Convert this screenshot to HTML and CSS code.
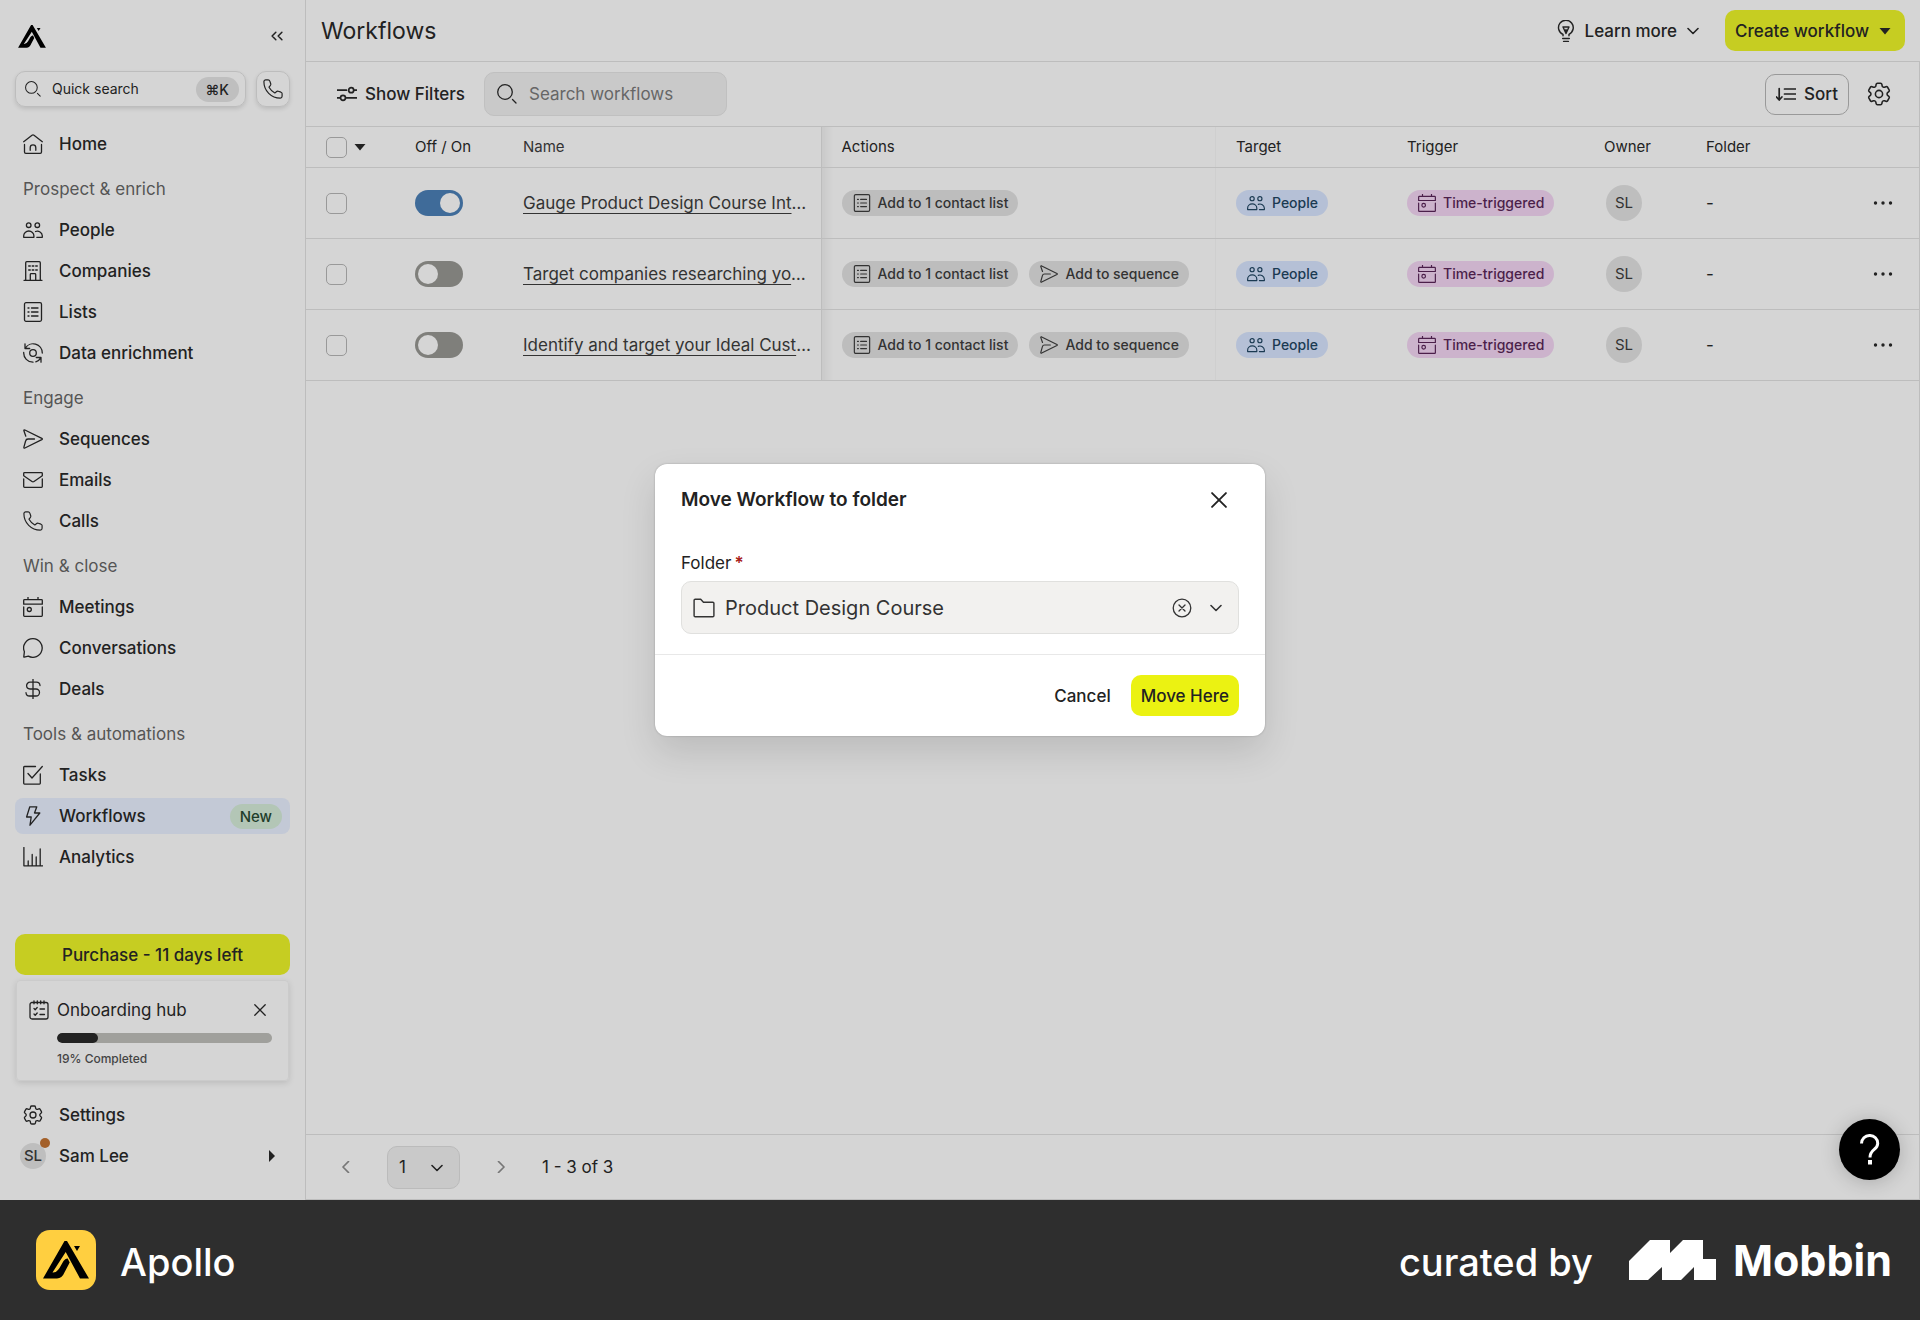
FILE: index.html
```html
<!DOCTYPE html>
<html lang="en">
<head>
<meta charset="utf-8">
<title>Workflows</title>
<meta name="viewport" content="width=device-width, initial-scale=1">
<link rel="stylesheet" href="styles.css">
</head>
<body>
<svg class="sprite" aria-hidden="true">
  <symbol id="logo" viewBox="0 0 46 38"><path d="M21.500 0H24l22 37.500h-9L22.700 11 9.500 31.500q4 .5 7-4.500l4-7q2-3 4.200-2.500l2 4-5 9.500Q19 37.500 14 37.500H0z"/><path d="M31 5h6l-3 5z"/></symbol>
  <symbol id="home" viewBox="0 0 20 20"><path d="M.7 7.700 9 1.300q1-.7 2 0l8.300 6.400M1.500 10.500V18q0 1.300 1.300 1.300h14.400q1.300 0 1.300-1.300v-7.500M7.200 16.300v-2.600a2.800 2.800 0 0 1 5.600 0v2.600"/></symbol>
  <symbol id="people" viewBox="0 0 20 20"><circle cx="5.700" cy="5.200" r="2.300"/><circle cx="14.300" cy="5.200" r="2.300"/><path d="M.7 17.300v-1.500a5.100 4.800 0 0 1 10.200 0v1.500zM12.500 11.500a5 4.800 0 0 1 6.800 4.300v1.500h-5.500"/></symbol>
  <symbol id="building" viewBox="0 0 20 20"><path d="M1 19.300h18M2.700 19V1.700q0-1 1-1h12.600q1 0 1 1V19M7.300 19v-5.500q0-.8.800-.8h3.800q.8 0 .8.800V19M5.700 5h1.600m1.900 0h1.600m1.900 0h1.600M5.700 9h1.600m1.900 0h1.600m1.900 0h1.600"/></symbol>
  <symbol id="list" viewBox="0 0 20 20"><rect x="1.500" y=".7" width="17" height="18.600" rx="1.500"/><path d="M5 6h1M8.500 6h6.500M5 10h1M8.500 10h6.500M5 14h1M8.500 14h6.500"/></symbol>
  <symbol id="enrich" viewBox="0 0 20 20"><circle cx="10" cy="10" r="3.300"/><path d="M2 .8v4.700h4.700M2.200 5.300A9.200 9.200 0 0 1 19.300 10M.7 9.500a9.200 9.200 0 0 0 9.300 9.700M18 19.200v-4.700h-4.700M17.800 14.800a9 9 0 0 1-5 4"/></symbol>
  <symbol id="send" viewBox="0 0 20 20"><path d="M2.800 7.200.9 1.800Q.6.500 1.900 1L18.800 9.400q1.100.6 0 1.200L1.900 19q-1.300.5-1-.8L2.600 12q.5-2 2.400-2h6.500"/></symbol>
  <symbol id="mail" viewBox="0 0 20 20"><path d="M.7 5.800V3.500q0-.8.8-.8h17q.8 0 .8.800v2.300L11 11.500q-1 .7-2 0zM.7 9v7.500q0 .8.800.8h17q.8 0 .8-.8V9"/></symbol>
  <symbol id="phone" viewBox="1 1 22 22"><path d="M22 17v3a2 2 0 0 1-2 2A18 18 0 0 1 2 4a2 2 0 0 1 2-2h2.700q1.300 0 1.800 1.300l1 2.900q.4 1.200-.5 2.100L7.600 10A17 17 0 0 0 14 16.400l1.700-1.400q.9-.9 2.100-.5l2.900 1q1.300.5 1.300 1.500z"/></symbol>
  <symbol id="calendar" viewBox="0 0 20 20"><path d="M5 .2v2.500M15 .2v2.500M.7 7.200V3.500q0-.8.800-.8h17q.8 0 .8.800v3.700zM.7 10v8.500q0 .8.800.8h17q.8 0 .8-.8V10"/><circle cx="6.300" cy="12.500" r="2"/></symbol>
  <symbol id="chat" viewBox="0 0 20 20"><path d="M10 .7a9.300 9.300 0 1 1-4.700 17.400L1.200 19.200q-.5 0-.4-.6l.6-4.900A9.300 9.300 0 0 1 10 .7z"/></symbol>
  <symbol id="dollar" viewBox="0 0 20 20"><path d="M10 0v20M17 6.500q-.3-3.300-3.500-3.300H7a3.400 3.400 0 0 0 0 6.800h6a3.500 3.500 0 0 1 0 7H6.500Q3.300 17 3 13.700"/></symbol>
  <symbol id="task" viewBox="0 0 20 20"><path d="M12.500 1.500h-11q-.8 0-.8.800v16q0 .8.800.8h15q.8 0 .8-.8V9M5 8.500l4 4.500L19.300 1.500"/></symbol>
  <symbol id="bolt" viewBox="0 0 20 20"><path d="M6.800.8h7L11.500 7h5.300L7 19.200 8.200 11H3.600z"/></symbol>
  <symbol id="chart" viewBox="0 0 20 20"><path d="M.9.500v18.300h18.600M5.200 18.500V14M9.200 18.500V7.500M13.200 18.500V10M17.200 18.500V2"/></symbol>
  <symbol id="gear" viewBox="2 2 20 20"><path d="M9.594 3.940c.09-.542.56-.94 1.110-.94h2.593c.55 0 1.020.398 1.110.94l.213 1.281c.063.374.313.686.645.87.074.04.147.083.22.127.325.196.72.257 1.075.124l1.217-.456a1.125 1.125 0 0 1 1.370.49l1.296 2.247a1.125 1.125 0 0 1-.26 1.431l-1.003.827c-.293.241-.438.613-.43.992a7.723 7.723 0 0 1 0 .255c-.008.378.137.75.43.991l1.004.827c.424.35.534.955.26 1.430l-1.298 2.247a1.125 1.125 0 0 1-1.369.491l-1.217-.456c-.355-.133-.75-.072-1.076.124a6.470 6.470 0 0 1-.22.128c-.331.183-.581.495-.644.869l-.213 1.281c-.09.543-.56.94-1.110.94h-2.594c-.55 0-1.019-.398-1.110-.94l-.213-1.281c-.062-.374-.312-.686-.644-.87a6.520 6.520 0 0 1-.22-.127c-.325-.196-.72-.257-1.076-.124l-1.217.456a1.125 1.125 0 0 1-1.369-.49l-1.297-2.247a1.125 1.125 0 0 1 .26-1.431l1.004-.827c.292-.24.437-.613.43-.991a6.932 6.932 0 0 1 0-.255c.007-.38-.138-.751-.43-.992l-1.004-.827a1.125 1.125 0 0 1-.26-1.430l1.297-2.247a1.125 1.125 0 0 1 1.370-.491l1.216.456c.356.133.751.072 1.076-.124.072-.044.146-.086.22-.128.332-.183.582-.495.644-.869z"/><circle cx="12" cy="12" r="3"/></symbol>
  <symbol id="search" viewBox="0 0 20 20"><circle cx="8" cy="8" r="7.300"/><path d="m15.500 15.500 3.500 3.500"/></symbol>
  <symbol id="filters" viewBox="0 0 20 20"><path d="M0 6.200h9.500M17.500 6.200H20M0 13.800h3M9.500 13.800H20"/><circle cx="14.200" cy="6.200" r="2.500"/><circle cx="6" cy="13.800" r="2.500"/></symbol>
  <symbol id="sort" viewBox="0 0 20 20"><path d="M3.200 4.500v11M.5 13l2.700 3 2.700-3M8.500 5H20M8.500 10H20M8.500 15H20"/></symbol>
  <symbol id="bulb" viewBox="0 0 20 20"><path d="M7.300 14.300v-1.200A6.700 6.700 0 1 1 12.700 13v1.300M7 16.800h6M7.800 19.400h4.400M7.300 6.300h5.400L10 12.300zM10 8.500v3.500"/></symbol>
  <symbol id="down" viewBox="0 0 12 12"><path d="m1 3.500 5 5 5-5"/></symbol>
  <symbol id="left" viewBox="0 0 12 12"><path d="M8.500.5 3 6l5.500 5.500"/></symbol>
  <symbol id="right" viewBox="0 0 12 12"><path d="M3.500.5 9 6l-5.500 5.500"/></symbol>
  <symbol id="collapse" viewBox="0 0 12 12"><path d="M5 2.800 1.800 6 5 9.200M10.200 2.800 7 6l3.200 3.200"/></symbol>
  <symbol id="close" viewBox="0 0 12 12"><path d="m.8.8 10.400 10.400M11.200.8.8 11.200"/></symbol>
  <symbol id="caret" viewBox="0 0 12 12"><path d="M.5 3h11L6 9.500z"/></symbol>
  <symbol id="caret-right" viewBox="0 0 12 12"><path d="M3 0v12l6-6z"/></symbol>
  <symbol id="dots" viewBox="0 0 20 20"><circle cx="2.500" cy="10" r="1.700"/><circle cx="10" cy="10" r="1.700"/><circle cx="17.500" cy="10" r="1.700"/></symbol>
  <symbol id="folder" viewBox="0 0 20 20"><path d="M1 3q0-1 1-1h5l2.500 2.700H18q1 0 1 1V17q0 1-1 1H2q-1 0-1-1z"/></symbol>
  <symbol id="clear" viewBox="0 0 20 20"><circle cx="10" cy="10" r="8.800"/><path d="m7 7 6 6M13 7l-6 6"/></symbol>
  <symbol id="checklist" viewBox="0 0 20 20"><rect x="1" y="2.500" width="18" height="16.500" rx="2"/><path d="M5 .8v3M8.300.8v3M11.700.8v3M15 .8v3M5 8.500l1.200 1.200 2-2.200M11 9h4.500M5 14l1.200 1.200 2-2.200M11 14.500h4.500"/></symbol>
</svg>

<div class="app">
  <aside class="sidebar">
    <div class="brand">
      <svg class="brand-logo"><use href="#logo"/></svg>
      <button class="bare" aria-label="Collapse sidebar"><svg class="icon collapse"><use href="#collapse"/></svg></button>
    </div>
    <div class="quick">
      <button class="quick-search"><svg class="icon s16"><use href="#search"/></svg><span>Quick search</span><kbd>⌘K</kbd></button>
      <button class="quick-call" aria-label="Call"><svg class="icon s20"><use href="#phone"/></svg></button>
    </div>
    <nav class="nav">
      <a href="#"><svg class="icon s20"><use href="#home"/></svg>Home</a>
      <h2>Prospect &amp; enrich</h2>
      <a href="#"><svg class="icon s20"><use href="#people"/></svg>People</a>
      <a href="#"><svg class="icon s20"><use href="#building"/></svg>Companies</a>
      <a href="#"><svg class="icon s20"><use href="#list"/></svg>Lists</a>
      <a href="#"><svg class="icon s20"><use href="#enrich"/></svg>Data enrichment</a>
      <h2>Engage</h2>
      <a href="#"><svg class="icon s20"><use href="#send"/></svg>Sequences</a>
      <a href="#"><svg class="icon s20"><use href="#mail"/></svg>Emails</a>
      <a href="#"><svg class="icon s20"><use href="#phone"/></svg>Calls</a>
      <h2>Win &amp; close</h2>
      <a href="#"><svg class="icon s20"><use href="#calendar"/></svg>Meetings</a>
      <a href="#"><svg class="icon s20"><use href="#chat"/></svg>Conversations</a>
      <a href="#"><svg class="icon s20"><use href="#dollar"/></svg>Deals</a>
      <h2>Tools &amp; automations</h2>
      <a href="#"><svg class="icon s20"><use href="#task"/></svg>Tasks</a>
      <a href="#" class="active" aria-current="page"><svg class="icon s20"><use href="#bolt"/></svg>Workflows<span class="badge">New</span></a>
      <a href="#"><svg class="icon s20"><use href="#chart"/></svg>Analytics</a>
    </nav>
    <div class="sidebar-end">
      <button class="btn primary wide">Purchase - 11 days left</button>
      <section class="hub">
        <div class="hub-head"><svg class="icon s20"><use href="#checklist"/></svg><span>Onboarding hub</span><button class="bare" aria-label="Dismiss"><svg class="icon s12"><use href="#close"/></svg></button></div>
        <div class="progress"><div class="progress-fill" style="width:19%"></div></div>
        <p>19% Completed</p>
      </section>
      <nav class="nav">
        <a href="#"><svg class="icon s20"><use href="#gear"/></svg>Settings</a>
        <a href="#" class="user"><span class="avatar small">SL<i class="status"></i></span>Sam Lee<svg class="solid s12 push"><use href="#caret-right"/></svg></a>
      </nav>
    </div>
  </aside>

  <main class="main">
    <header class="topbar">
      <h1>Workflows</h1>
      <div class="topbar-actions">
        <button class="btn plain menu"><svg class="icon s22"><use href="#bulb"/></svg>Learn more<svg class="icon s12 chev"><use href="#down"/></svg></button>
        <button class="btn primary create">Create workflow<svg class="solid s12"><use href="#caret"/></svg></button>
      </div>
    </header>
    <div class="panel">
      <div class="toolbar">
        <button class="btn plain"><svg class="icon s20 bold"><use href="#filters"/></svg>Show Filters</button>
        <label class="search"><svg class="icon s20"><use href="#search"/></svg><input type="search" placeholder="Search workflows" aria-label="Search workflows"></label>
        <div class="toolbar-end">
          <button class="btn outline"><svg class="icon s20 bold"><use href="#sort"/></svg>Sort</button>
          <button class="bare" aria-label="Table settings"><svg class="icon s24"><use href="#gear"/></svg></button>
        </div>
      </div>
      <table>
        <colgroup><col class="c-check"><col class="c-toggle"><col class="c-name"><col class="c-actions"><col class="c-target"><col class="c-trigger"><col class="c-owner"><col></colgroup>
        <thead>
          <tr>
            <th><div class="checks"><input type="checkbox" class="check" aria-label="Select all"><svg class="solid s12"><use href="#caret"/></svg></div></th>
            <th>Off / On</th><th class="pinned">Name</th><th>Actions</th><th>Target</th><th>Trigger</th><th>Owner</th><th>Folder</th>
          </tr>
        </thead>
        <tbody>
          <tr>
            <td><div class="checks"><input type="checkbox" class="check" aria-label="Select row"></div></td>
            <td><input type="checkbox" class="toggle" aria-label="On" checked></td>
            <td class="pinned"><a href="#">Gauge Product Design Course Int</a>…</td>
            <td><div class="chips"><span class="chip"><svg class="icon s18"><use href="#list"/></svg>Add to 1 contact list</span></div></td>
            <td><div class="chips"><span class="chip blue"><svg class="icon s18"><use href="#people"/></svg>People</span></div></td>
            <td><div class="chips"><span class="chip pink"><svg class="icon s18"><use href="#calendar"/></svg>Time-triggered</span></div></td>
            <td><span class="avatar">SL</span></td>
            <td><div class="last"><span>-</span><button class="bare" aria-label="More"><svg class="solid s20"><use href="#dots"/></svg></button></div></td>
          </tr>
          <tr>
            <td><div class="checks"><input type="checkbox" class="check" aria-label="Select row"></div></td>
            <td><input type="checkbox" class="toggle" aria-label="On"></td>
            <td class="pinned"><a href="#">Target companies researching yo</a>…</td>
            <td><div class="chips"><span class="chip"><svg class="icon s18"><use href="#list"/></svg>Add to 1 contact list</span><span class="chip"><svg class="icon s18"><use href="#send"/></svg>Add to sequence</span></div></td>
            <td><div class="chips"><span class="chip blue"><svg class="icon s18"><use href="#people"/></svg>People</span></div></td>
            <td><div class="chips"><span class="chip pink"><svg class="icon s18"><use href="#calendar"/></svg>Time-triggered</span></div></td>
            <td><span class="avatar">SL</span></td>
            <td><div class="last"><span>-</span><button class="bare" aria-label="More"><svg class="solid s20"><use href="#dots"/></svg></button></div></td>
          </tr>
          <tr>
            <td><div class="checks"><input type="checkbox" class="check" aria-label="Select row"></div></td>
            <td><input type="checkbox" class="toggle" aria-label="On"></td>
            <td class="pinned"><a href="#">Identify and target your Ideal Cust</a>…</td>
            <td><div class="chips"><span class="chip"><svg class="icon s18"><use href="#list"/></svg>Add to 1 contact list</span><span class="chip"><svg class="icon s18"><use href="#send"/></svg>Add to sequence</span></div></td>
            <td><div class="chips"><span class="chip blue"><svg class="icon s18"><use href="#people"/></svg>People</span></div></td>
            <td><div class="chips"><span class="chip pink"><svg class="icon s18"><use href="#calendar"/></svg>Time-triggered</span></div></td>
            <td><span class="avatar">SL</span></td>
            <td><div class="last"><span>-</span><button class="bare" aria-label="More"><svg class="solid s20"><use href="#dots"/></svg></button></div></td>
          </tr>
        </tbody>
      </table>
      <div class="pager">
        <button class="bare dim" aria-label="Previous page"><svg class="icon s12 bold"><use href="#left"/></svg></button>
        <div class="select"><select aria-label="Page"><option>1</option></select><svg class="icon s12 chev"><use href="#down"/></svg></div>
        <button class="bare dim" aria-label="Next page"><svg class="icon s12 bold"><use href="#right"/></svg></button>
        <span>1 - 3 of 3</span>
      </div>
    </div>
  </main>

  <div class="backdrop">
    <div class="dialog" role="dialog" aria-modal="true" aria-labelledby="dialog-title">
      <div class="dialog-head"><h2 id="dialog-title">Move Workflow to folder</h2><button class="bare" aria-label="Close"><svg class="icon s16 heavy"><use href="#close"/></svg></button></div>
      <div class="dialog-body">
        <label for="folder">Folder<span class="required">*</span></label>
        <div class="combo">
          <svg class="icon s22"><use href="#folder"/></svg>
          <input id="folder" type="text" value="Product Design Course">
          <button class="bare" aria-label="Clear"><svg class="icon s20"><use href="#clear"/></svg></button>
          <button class="bare" aria-label="Open list"><svg class="icon s12 chev"><use href="#down"/></svg></button>
        </div>
      </div>
      <div class="dialog-foot"><button class="btn plain">Cancel</button><button class="btn primary bright">Move Here</button></div>
    </div>
  </div>
  <button class="help" aria-label="Help"><svg class="help-mark" viewBox="0 0 20 32"><path d="M1.500 9.500a8 8 0 0 1 8.200-8 7.800 7.800 0 0 1 8 8c0 6.500-7.700 5.500-7.700 14"/><rect x="8" y="26" width="4" height="4.500"/></svg></button>
</div>

<footer class="footer">
  <div class="footer-app"><span class="app-tile"><svg class="tile-logo"><use href="#logo"/></svg></span><span class="app-name">Apollo</span></div>
  <div class="footer-by"><span class="app-name">curated by</span>
    <svg class="mark" viewBox="0 0 87 40"><path d="M0 21 21 0h20v13L54 0h20v19h13v21H65V27L52 40H33V27L19 40H0z"/></svg>
    <span class="mobbin">Mobbin</span></div>
</footer>
</body>
</html>
```
FILE: styles.css
```css
:root {
  --bg: #d5d5d5;
  --line: #bdbdbd;
  --ink: #222;
  --muted: #555;
  --lime: #c6cd22;
}
* { box-sizing: border-box; }
body {
  margin: 0;
  min-height: 100vh;
  display: flex;
  flex-direction: column;
  background: var(--bg);
  color: var(--ink);
  font: 400 17px/24px Inter, "Liberation Sans", sans-serif;
}
h1, h2, p { margin: 0; font-weight: 400; }
button, input, select { font: inherit; color: inherit; }
button { cursor: pointer; }
a { color: inherit; }

.sprite { position: absolute; width: 0; height: 0; }
.icon { flex: none; display: block; fill: none; stroke: currentColor; stroke-width: 1.3; stroke-linecap: round; stroke-linejoin: round; }
.solid { flex: none; display: block; fill: currentColor; }
.bold { stroke-width: 1.7; }
.heavy { stroke-width: 1.4; }
.chev { stroke-width: 1.6; }
.s12 { width: 12px; height: 12px; }
.s16 { width: 16px; height: 16px; }
.s18 { width: 18px; height: 18px; }
.s20 { width: 20px; height: 20px; }
.s22 { width: 22px; height: 22px; }
.s24 { width: 24px; height: 24px; }

.bare { display: flex; padding: 0; border: 0; background: none; }
.btn {
  display: flex; align-items: center; justify-content: center; gap: 8px;
  height: 41px; padding: 0 10px;
  border: 0; border-radius: 10px; background: none;
  font-weight: 500; white-space: nowrap;
}
.primary { background: var(--lime); }
.bright { background: #ebf212; }
.outline { border: 1px solid #999; }
.wide { width: 100%; }
.create { gap: 10px; padding-right: 14px; }
.menu .chev { margin-left: 2px; }

.app { position: relative; flex: 1; display: flex; }

.sidebar {
  flex: none; width: 306px; padding: 24px 15px 26px;
  display: flex; flex-direction: column;
  border-right: 1px solid var(--line);
}
.brand { display: flex; align-items: center; justify-content: space-between; padding: 0 6px 0 3px; height: 24px; }
.brand-logo { width: 28px; height: 23px; fill: #000; }
.collapse { width: 14px; height: 14px; color: var(--ink); }
.quick { display: flex; gap: 10px; margin-top: 23px; }
.quick-search, .quick-call {
  height: 36px; border: 1px solid var(--line); border-radius: 10px; background: none;
  box-shadow: 0 2px 4px rgba(0, 0, 0, .12);
  display: flex; align-items: center;
}
.quick-search { flex: 1; gap: 11px; padding: 0 6px 0 9px; font-size: 14px; }
.quick-call { width: 34px; justify-content: center; padding: 0; }
kbd { margin-left: auto; padding: 0 10px; border-radius: 13px; background: #bfbfbf; font: 500 14px/25px Inter, "DejaVu Sans", sans-serif; }

.nav { display: flex; flex-direction: column; gap: 5px; }
.quick + .nav { margin-top: 19px; }
.nav a {
  display: flex; align-items: center; gap: 16px; height: 36px; padding: 0 8px;
  border-radius: 8px; font-weight: 500; text-decoration: none;
}
.nav h2 { height: 36px; margin-top: 4px; padding-left: 8px; font-size: 17px; line-height: 36px; color: var(--muted); }
.nav .active { background: #c3c9d6; }
.badge { margin-left: auto; padding: 0 10px; border-radius: 13px; background: #b3c6b6; color: #1f3d2b; font-size: 15px; line-height: 25px; }
.sidebar-end { margin-top: auto; }
.hub { margin: 5px 1px 16px; padding: 17px 16px 12px 12px; border: 1px solid #cbcbcb; border-radius: 4px; box-shadow: 0 2px 6px rgba(0, 0, 0, .12); }
.hub-head { display: flex; align-items: center; gap: 8px; }
.hub-head .bare { margin: 0 6px 0 auto; }
.progress { height: 10px; margin: 11px 0 7px 28px; border-radius: 5px; background: #a0a09c; overflow: hidden; }
.progress-fill { height: 100%; border-radius: 5px; background: var(--ink); }
.hub p { margin-left: 28px; font-size: 12px; line-height: 18px; font-weight: 500; color: #444; }
.avatar {
  position: relative; display: flex; align-items: center; justify-content: center;
  width: 36px; height: 36px; margin-left: 2px; border-radius: 50%; background: #bebebe; font-size: 15px; color: #333;
}
.small { width: 26px; height: 26px; margin: 0 -3px; }
.status { position: absolute; top: -5px; right: -4px; width: 10px; height: 10px; border-radius: 50%; background: #a3602a; }
.push { margin-left: auto; margin-right: 4px; }

.main { flex: 1; min-width: 0; display: flex; flex-direction: column; }
.topbar { display: flex; align-items: center; justify-content: space-between; height: 61px; padding: 0 15px; }
h1 { font-size: 23px; line-height: 32px; }
.topbar-actions { display: flex; gap: 16px; }
.panel { flex: 1; display: flex; flex-direction: column; border: 1px solid var(--line); border-left: 0; }
.toolbar { display: flex; align-items: center; height: 64px; padding: 0 28px 0 21px; gap: 9px; }
.search {
  display: flex; align-items: center; gap: 12px; width: 243px; height: 44px; padding: 0 12px;
  border: 1px solid #c0c0c0; border-radius: 10px; background: #c9c9c9;
}
.search input, .combo input { flex: 1; min-width: 0; padding: 0; border: 0; outline: 0; background: none; }
.search input::placeholder { color: #666; opacity: 1; }
.toolbar-end { display: flex; align-items: center; gap: 18px; margin-left: auto; }

table { width: 100%; table-layout: fixed; border-collapse: collapse; border-top: 1px solid var(--line); }
.c-check { width: 89px; }
.c-toggle { width: 108px; }
.c-name { width: 318px; }
.c-actions { width: 395px; }
.c-target { width: 171px; }
.c-trigger { width: 197px; }
.c-owner { width: 102px; }
th, td { padding: 0 20px; text-align: left; font-weight: 400; white-space: nowrap; border-bottom: 1px solid var(--line); }
th { height: 41px; font-size: 15px; }
td { height: 71px; }
.pinned { padding-right: 0; border-right: 1px solid var(--line); color: #333; }
.pinned + * { background: linear-gradient(90deg, rgba(0, 0, 0, .06), transparent 12px); }
td a { text-decoration-thickness: 1px; text-underline-offset: 4px; }
.checks { display: flex; align-items: center; gap: 7px; }
.check { appearance: none; width: 21px; height: 21px; margin: 0; border: 1px solid #999; border-radius: 5px; }
.toggle { appearance: none; display: block; width: 48px; height: 26px; margin: 0; padding: 3px; border-radius: 13px; background: #7f7f7b; }
.toggle::before { content: ""; display: block; width: 20px; height: 20px; border-radius: 50%; background: var(--bg); }
.toggle:checked { background: #3f6b99; }
.toggle:checked::before { margin-left: auto; }
.chips { display: flex; gap: 11px; }
.chip { display: flex; align-items: center; gap: 7px; height: 26px; padding: 0 10px 0 11px; border-radius: 13px; background: #bdbdbd; color: #333; font-size: 14px; font-weight: 500; }
.blue { background: #b5c0d6; color: #1b3a52; }
.pink { background: #ccb3cc; color: #4b1f4a; }
.last { display: flex; align-items: center; justify-content: space-between; padding-right: 6px; }

.pager { display: flex; align-items: center; height: 65px; margin-top: auto; padding-left: 34px; border-top: 1px solid var(--line); }
.dim { color: #777; }
.select { position: relative; margin: 0 35px; }
.select select { appearance: none; width: 73px; height: 43px; padding: 0 11px; border: 1px solid #bbb; border-radius: 10px; background: #c9c9c9; }
.select svg { position: absolute; right: 17px; top: 16px; pointer-events: none; }
.pager > span { margin-left: 35px; }

.backdrop { position: absolute; inset: 0; display: flex; align-items: center; justify-content: center; }
.dialog { width: 610px; border-radius: 12px; background: #fff; box-shadow: 0 16px 36px rgba(0, 0, 0, .12), 0 0 2px rgba(0, 0, 0, .25); }
.dialog-head { display: flex; align-items: center; justify-content: space-between; height: 72px; padding: 0 38px 0 26px; }
.dialog-head h2 { font-size: 19px; font-weight: 600; }
.dialog-body { padding: 15px 26px 20px; border-bottom: 1px solid #e8e8e8; }
.dialog-body label { display: flex; height: 30px; gap: 3px; }
.required { color: #a8201a; font-weight: 600; }
.combo { display: flex; align-items: center; height: 53px; padding: 0 16px 0 11px; gap: 10px; border: 1px solid #e0e0de; border-radius: 10px; background: #f2f1ef; font-size: 20px; color: #333; }
.combo .bare:last-child { margin-left: 8px; }
.dialog-foot { display: flex; justify-content: flex-end; gap: 10px; padding: 20px 26px; }

.help {
  position: absolute; right: 20px; bottom: 20px; width: 61px; height: 61px; padding: 0;
  display: flex; align-items: center; justify-content: center;
  border: 0; border-radius: 50%; background: #000; box-shadow: 0 2px 20px rgba(0, 0, 0, .2);
}
.help-mark { width: 20px; height: 32px; fill: none; stroke: #fff; stroke-width: 3; }
.help-mark rect { fill: #fff; stroke: none; }

.footer { display: flex; align-items: center; justify-content: space-between; height: 120px; padding: 0 28px 0 36px; background: #2e2e2e; color: #fff; }
.footer-app, .footer-by { display: flex; align-items: center; }
.app-tile { display: flex; align-items: center; justify-content: center; width: 60px; height: 60px; border-radius: 14px; background: #ffcf40; margin-right: 24px; }
.tile-logo { width: 46px; height: 38px; fill: #000; }
.app-name { padding-top: 3px; font-size: 38px; line-height: 48px; font-weight: 500; }
.mark { width: 87px; height: 40px; margin: 0 17px 0 36px; fill: #fff; }
.mobbin { font-size: 43px; line-height: 48px; font-weight: 700; }
```
